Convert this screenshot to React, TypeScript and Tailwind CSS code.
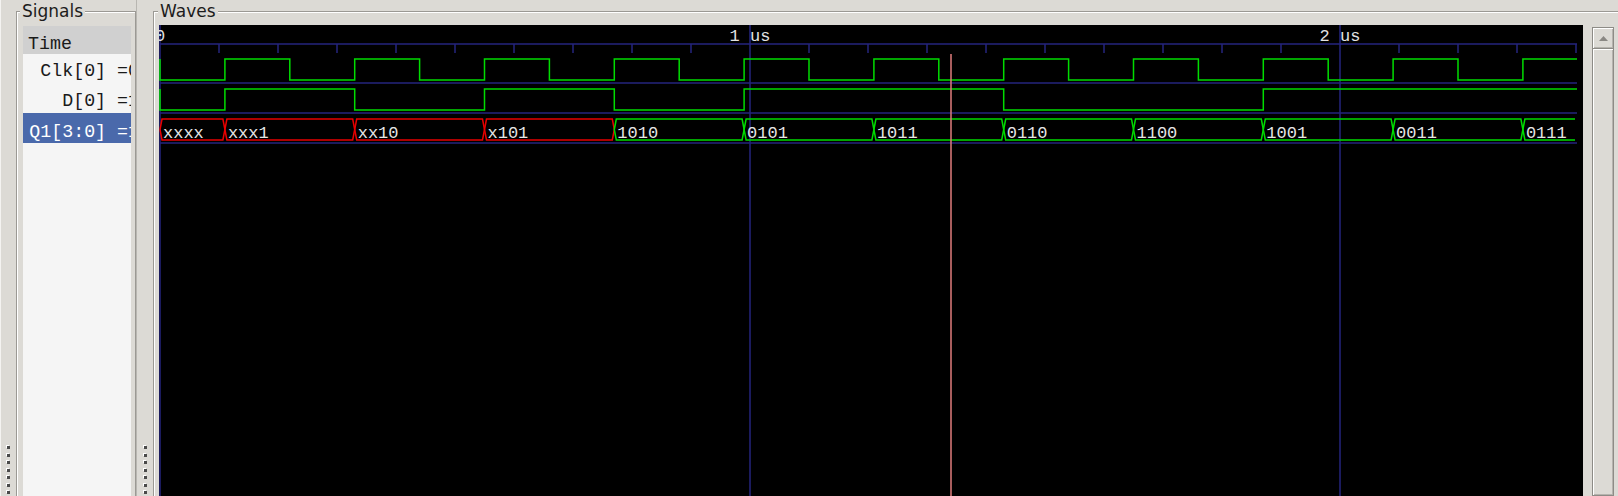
import React from 'react';

// time axis: 0 ns sits at x=160, 100 ns per 59 px
const X0 = 160;
const END = 1577;
const tx = (ns: number) => X0 + ns * 0.59;

const rises = Array.from({ length: 11 }, (_, k) => tx(110 + 220 * k));
const falls = Array.from({ length: 11 }, (_, k) => tx(220 + 220 * k));

const qValues = ['xxxx', 'xxx1', 'xx10', 'x101', '1010', '0101', '1011', '0110', '1100', '1001', '0011', '0111'];

const GREEN = '#00dc00';
const RED = '#e80000';
const BLUE = '#25257e';

const clkPath = () => {
  let d = `M${X0} 59 V80`;
  rises.forEach((r, k) => {
    d += ` H${r} V59`;
    if (falls[k] < END) d += ` H${falls[k]} V80`;
  });
  return d + ` H${END}`;
};

const dPath = () => {
  // D toggles on these clock edges
  const edges = [0, 1, 2, 3, 4, 6, 8];
  let d = `M${X0} 89 V110`;
  let high = false;
  edges.forEach((k) => {
    high = !high;
    d += ` H${rises[k]} V${high ? 89 : 110}`;
  });
  return d + ` H${END}`;
};

const GripDots = () => (
  <div className="flex flex-col gap-[4.5px] pb-[2px]">
    {Array.from({ length: 7 }).map((_, i) => (
      <div key={i} className="h-[3px] w-[3px] bg-[#4a4a4a] shadow-[-1px_-1px_0_#ffffff]" />
    ))}
  </div>
);

const SignalRow = ({ label, selected, h, pb }: { label: string; selected?: boolean; h: string; pb: string }) => (
  <div className={`flex items-end overflow-hidden ${h} ${pb} ${selected ? 'bg-[#4a69ab] text-white' : 'text-[#1a1a1a]'}`}>
    <div className="w-[116px] shrink-0 whitespace-nowrap text-right">{label}</div>
  </div>
);

const Waves = () => {
  const bounds = [X0, ...rises, END];
  const ticks = Array.from({ length: 24 }, (_, i) => i + 1).filter((i) => i !== 10 && i !== 20);

  return (
    <svg width={1424} height={471} viewBox="159 25 1424 471" className="block">
      <rect x={159} y={25} width={1424} height={471} fill="#000" />

      {/* grid */}
      <g stroke={BLUE} strokeWidth={1.5} fill="none">
        <line x1={X0} y1={25} x2={X0} y2={496} />
        <line x1={tx(1000)} y1={25} x2={tx(1000)} y2={496} />
        <line x1={tx(2000)} y1={25} x2={tx(2000)} y2={496} />
        <line x1={X0} y1={44} x2={END} y2={44} />
        <line x1={X0} y1={83} x2={END} y2={83} />
        <line x1={X0} y1={113} x2={END} y2={113} />
        <line x1={X0} y1={143} x2={END} y2={143} />
        {ticks.map((i) => (
          <line key={i} x1={X0 + 59 * i} y1={44} x2={X0 + 59 * i} y2={53} />
        ))}
      </g>

      <g fill="#e2e2e2" fontSize={17} fontFamily="'Liberation Mono', monospace" textAnchor="middle">
        <text x={X0} y={41}>0</text>
        <text x={tx(1000)} y={41}>1 us</text>
        <text x={tx(2000)} y={41}>2 us</text>
      </g>

      <path d={clkPath()} stroke={GREEN} strokeWidth={1.5} fill="none" />
      <path d={dPath()} stroke={GREEN} strokeWidth={1.5} fill="none" />

      {/* Q1 bus */}
      {qValues.map((v, i) => {
        const a = bounds[i];
        const b = bounds[i + 1];
        const color = v.includes('x') ? RED : GREEN;
        const last = i === qValues.length - 1;
        const d = last
          ? `M${a} 129.5 L${a + 2} 119 H${b - 2} M${a} 129.5 L${a + 2} 140 H${b - 2}`
          : `M${a} 129.5 L${a + 2} 119 H${b - 2} L${b} 129.5 L${b - 2} 140 H${a + 2} Z`;
        return (
          <g key={i}>
            <path d={d} stroke={color} strokeWidth={1.5} fill="none" />
            <text x={a + 3} y={138} fill="#e6e6e6" fontSize={17} fontFamily="'Liberation Mono', monospace">
              {v}
            </text>
          </g>
        );
      })}

      {/* marker */}
      <line x1={951} y1={54} x2={951} y2={496} stroke="#e07c7c" strokeWidth={1.5} />
    </svg>
  );
};

export default function App() {
  return (
    <div className="flex h-[496px] w-[1618px] overflow-hidden bg-[#dcdad5] font-['Liberation_Mono',monospace]">
      {/* left pane grip */}
      <div className="flex w-[16px] shrink-0 flex-col items-center justify-end border-l border-[#f4f3f1]">
        <GripDots />
      </div>

      {/* Signals */}
      <fieldset className="h-[496px] w-[120px] shrink-0 border border-b-0 border-[#9b9994] shadow-[inset_1px_1px_0_#ffffff]">
        <legend className="ml-[3px] bg-[#dcdad5] px-[2px] font-['DejaVu_Sans',sans-serif] text-[17px] leading-[23px] text-[#1c1c1c]">
          Signals
        </legend>
        <div className="pl-[6px] pr-[4px] pt-[3px]">
          <div className="h-[470px] w-[108px] bg-[#f5f5f5] text-[18.3px] leading-[20px]">
            <div className="flex h-[28px] items-end bg-[#d0d0d0] pl-[5px] text-[#1a1a1a]">Time</div>
            <SignalRow label="Clk[0] =0" h="h-[29px]" pb="pb-[2px]" />
            <SignalRow label="D[0] =1" h="h-[30px]" pb="pb-[2px]" />
            <SignalRow label="Q1[3:0] =1" selected h="h-[30px]" pb="pb-[1px]" />
          </div>
        </div>
      </fieldset>

      {/* pane handle */}
      <div className="flex w-[17px] shrink-0 flex-col items-center justify-end border-l border-[#b8b6b1]">
        <GripDots />
      </div>

      {/* Waves */}
      <fieldset className="h-[496px] w-[1468px] shrink-0 border border-b-0 border-[#9b9994] shadow-[inset_1px_1px_0_#ffffff]">
        <legend className="ml-[4px] bg-[#dcdad5] px-[2px] font-['DejaVu_Sans',sans-serif] text-[17px] leading-[23px] text-[#1c1c1c]">
          Waves
        </legend>
        <div className="flex pl-[5px] pt-[2px]">
          <Waves />
          <div className="ml-[9px] mt-[2px] flex h-[469px] w-[22px] shrink-0 flex-col border border-[#8d8b86]">
            <div className="flex h-[21px] items-center justify-center border-b border-[#8d8b86] shadow-[inset_1px_1px_0_#ffffff,inset_-1px_-1px_0_#b5b3ae]">
              <svg width={9} height={5} viewBox="0 0 9 5">
                <path d="M0 5 L4.5 0 L9 5 Z" fill="#8a8884" />
              </svg>
            </div>
            <div className="flex-1 shadow-[inset_1px_1px_0_#ffffff,inset_-1px_-1px_0_#b5b3ae]" />
          </div>
        </div>
      </fieldset>
    </div>
  );
}
